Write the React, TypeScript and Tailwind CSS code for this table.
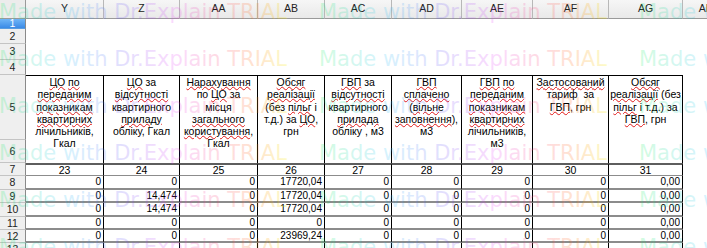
import React from 'react';

type Col = { l: string; w: string; n: number; lines: string[] };

const cols: Col[] = [
  { l: 'Y', w: 'w-[78px]', n: 23, lines: ['~ЦО~ ~по~', '~переданим~', '~показникам~', '~квартирних~', 'лічильників,', 'Гкал'] },
  { l: 'Z', w: 'w-[76px]', n: 24, lines: ['~ЦО~ за', '~відсутності~', 'квартирного', '~приладу~', 'обліку, Гкал'] },
  { l: 'AA', w: 'w-[78px]', n: 25, lines: ['~Нарахування~', 'по ~ЦО~ за', 'місця', '~загального~', '~користування~,', 'Гкал'] },
  { l: 'AB', w: 'w-[67px]', n: 26, lines: ['~Обсяг~', '~реалізації~', '(без ~пільг~ і', 'т.д.) за ~ЦО~,', 'грн'] },
  { l: 'AC', w: 'w-[67px]', n: 27, lines: ['~ГВП~ за', '~відсутності~', 'квартирного', '~прилада~', 'обліку , м3'] },
  { l: 'AD', w: 'w-[70px]', n: 28, lines: ['~ГВП~', '~сплачено~', '(~вільне~', '~заповнення~),', 'м3'] },
  { l: 'AE', w: 'w-[71px]', n: 29, lines: ['~ГВП~ ~по~', '~переданим~', '~показникам~', '~квартирних~', 'лічильників,', 'м3'] },
  { l: 'AF', w: 'w-[76px]', n: 30, lines: ['~Застосований~', 'тариф  за', '~ГВП~, грн'] },
  { l: 'AG', w: 'w-[74px]', n: 31, lines: ['~Обсяг~', '~реалізації~ (без', '~пільг~ і т.д.) за', '~ГВП~, грн'] },
];

const data: string[][] = [
  ['0', '0', '0', '17720,04', '0', '0', '0', '0', '0,00'],
  ['0', '14,474', '0', '17720,04', '0', '0', '0', '0', '0,00'],
  ['0', '14,474', '0', '17720,04', '0', '0', '0', '0', '0,00'],
  ['0', '0', '0', '0', '0', '0', '0', '0', '0,00'],
  ['0', '0', '0', '23969,24', '0', '0', '0', '0', '0,00'],
];

const dataRows = [
  { label: '8', h: 'h-[14px]' },
  { label: '9', h: 'h-[13px]' },
  { label: '10', h: 'h-[14px]' },
  { label: '11', h: 'h-[13px]' },
  { label: '12', h: 'h-[13px]' },
];

function Rich({ t }: { t: string }) {
  const parts = t.split('~');
  return (
    <>
      {parts.map((p, i) =>
        i % 2 ? (
          <span key={i} className="underline decoration-wavy decoration-[#e01818] decoration-1 underline-offset-[0px]">
            {p}
          </span>
        ) : (
          <React.Fragment key={i}>{p}</React.Fragment>
        )
      )}
    </>
  );
}

function RH({ label, h, sel }: { label: string; h: string; sel?: boolean }) {
  return (
    <div
      className={`${h} w-[26px] shrink-0 flex items-center justify-center border-r border-b text-[10.5px] leading-none overflow-hidden ${
        sel
          ? 'bg-gradient-to-b from-[#6fb6f7] to-[#3a8ae6] text-white border-r-[#8a8a8a] border-b-[#5a9de0]'
          : 'bg-[#efefef] text-[#222] border-r-[#8a8a8a] border-b-[#c4c4c4]'
      }`}
    >
      {label}
    </div>
  );
}

function Watermark() {
  const ys = [19, 66, 113, 160, 207, 254];
  const xs = [-1, 319, 639];
  return (
    <svg className="absolute left-0 top-0 pointer-events-none" width="707" height="248" viewBox="0 0 707 248">
      <defs>
        <linearGradient id="wm" gradientUnits="userSpaceOnUse" x1="-1" y1="0" x2="319" y2="0" spreadMethod="repeat">
          <stop offset="0" stopColor="hsl(140,85%,50%)" stopOpacity="0.19" />
          <stop offset="0.2" stopColor="hsl(195,90%,55%)" stopOpacity="0.19" />
          <stop offset="0.38" stopColor="hsl(245,90%,65%)" stopOpacity="0.19" />
          <stop offset="0.55" stopColor="hsl(295,90%,60%)" stopOpacity="0.19" />
          <stop offset="0.7" stopColor="hsl(350,95%,62%)" stopOpacity="0.19" />
          <stop offset="0.8" stopColor="hsl(25,100%,55%)" stopOpacity="0.21" />
          <stop offset="0.9" stopColor="hsl(58,100%,48%)" stopOpacity="0.22" />
          <stop offset="1" stopColor="hsl(140,85%,50%)" stopOpacity="0.19" />
        </linearGradient>
      </defs>
      {ys.map((y) =>
        xs.map((x) => (
          <text key={`${x}-${y}`} x={x} y={y} fill="url(#wm)" fontFamily="'DejaVu Sans', Verdana, sans-serif" fontSize="21">
            Made with Dr.Explain TRIAL
          </text>
        ))
      )}
    </svg>
  );
}

export default function App() {
  return (
    <div className="relative w-[707px] h-[248px] overflow-hidden bg-white text-black font-['Liberation_Sans',Arial,sans-serif]">
      {/* column headers */}
      <div className="flex h-[19px]">
        <div className="w-[26px] shrink-0 bg-[#ececec] border-r border-b border-[#9a9a9a]" />
        {cols.map((c) => (
          <div
            key={c.l}
            className={`${c.w} shrink-0 flex items-center justify-center bg-gradient-to-b from-[#f6f6f6] to-[#e9e9e9] border-r border-b border-r-[#b8b8b8] border-b-[#9a9a9a] text-[10.5px] text-[#222]`}
          >
            {c.l}
          </div>
        ))}
        <div className="w-[46px] shrink-0 flex items-center justify-center bg-gradient-to-b from-[#f6f6f6] to-[#e9e9e9] border-b border-[#9a9a9a] text-[10.5px] text-[#222]">
          AH
        </div>
      </div>

      {/* rows 1-4 */}
      <div className="flex">
        <RH label="1" h="h-[10px]" sel />
        <div className="flex-1" />
      </div>
      <div className="flex">
        <RH label="2" h="h-[15px]" />
        <div className="flex-1" />
      </div>
      <div className="flex">
        <RH label="3" h="h-[16px]" />
        <div className="flex-1" />
      </div>
      <div className="flex">
        <RH label="4" h="h-[15px]" />
        <div className="flex-1" />
      </div>

      {/* rows 5-6 merged header */}
      <div className="flex h-[88px]">
        <div className="w-[26px] shrink-0 flex flex-col">
          <RH label="5" h="h-[65px]" />
          <RH label="6" h="h-[23px]" />
        </div>
        {cols.map((c) => (
          <div
            key={c.l}
            className={`${c.w} shrink-0 border-t border-r border-black text-center text-[10.5px] leading-[12.3px] whitespace-pre`}
          >
            {c.lines.map((ln, i) => (
              <div key={i}>
                <Rich t={ln} />
              </div>
            ))}
          </div>
        ))}
      </div>

      {/* row 7 */}
      <div className="flex h-[13px]">
        <RH label="7" h="h-[13px]" />
        {cols.map((c) => (
          <div
            key={c.l}
            className={`${c.w} shrink-0 flex items-center justify-center border-t-2 border-r border-b border-t-[#5e5e5e] border-r-black border-b-[#8c8c8c] text-[10.5px] leading-none`}
          >
            {c.n}
          </div>
        ))}
      </div>

      {/* data rows */}
      {dataRows.map((r, ri) => (
        <div key={r.label} className="flex">
          <RH label={r.label} h={r.h} />
          {cols.map((c, ci) => (
            <div
              key={c.l}
              className={`${c.w} ${r.h} shrink-0 flex items-center justify-end pr-[2px] border-r border-b-2 border-r-black border-b-[#8c8c8c] text-[10px] leading-none`}
            >
              {data[ri][ci]}
            </div>
          ))}
        </div>
      ))}

      {/* row 13 partial */}
      <div className="flex">
        <RH label="13" h="h-[14px]" />
        {cols.map((c) => (
          <div key={c.l} className={`${c.w} h-[14px] shrink-0 border-r border-black`} />
        ))}
      </div>

      <Watermark />
    </div>
  );
}
